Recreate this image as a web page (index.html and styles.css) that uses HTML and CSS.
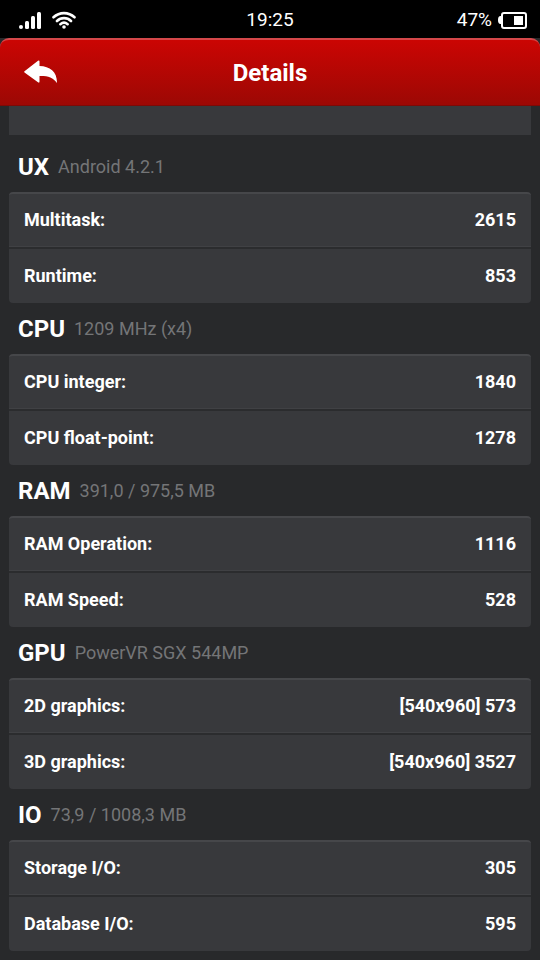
FILE: index.html
```
<!DOCTYPE html>
<html lang="en">
<head>
  <meta charset="UTF-8" />
  <meta name="viewport" content="width=device-width, initial-scale=1.0" />
  <title>Details</title>
  <link rel="stylesheet" href="styles.css">
</head>
<body>
  <!-- STATUS BAR -->
  <div class="status">
    <div class="status-left">
      <svg class="signal" width="22" height="18" viewBox="0 0 22 18" aria-hidden="true">
        <rect x="0" y="14" width="4" height="4" rx="2" />
        <rect x="6" y="10" width="4" height="8" rx="1.5" />
        <rect x="12" y="5" width="4" height="13" rx="1.5" />
        <rect x="18" y="1" width="4" height="17" rx="1.5" />
      </svg>
      <svg class="wifi" width="24" height="18" viewBox="0 0 24 18" aria-hidden="true">
        <path d="M1.5 6.3C7.5 .7 16.5 .7 22.5 6.3M5 10C9 6.2 15 6.2 19 10M8.4 13.2Q12 10.2 15.6 13.2" />
        <circle cx="12" cy="16" r="1.8" />
      </svg>
    </div>
    <time class="clock">19:25</time>
    <div class="status-right">
      <span>47%</span>
      <svg class="battery" width="29" height="18" viewBox="0 0 29 18" aria-hidden="true">
        <path d="M4 5H2.5Q0 5 0 9t2.5 4H4z" />
        <rect class="shell" x="4" y="2" width="24" height="15" rx="2" />
        <rect x="16" y="5" width="9" height="9" />
      </svg>
    </div>
  </div>

  <!-- TITLE BAR -->
  <header class="topbar">
    <button class="back" type="button" aria-label="Back">
      <svg width="34" height="26" viewBox="0 0 34 26" aria-hidden="true">
        <path d="M.5 11.2 14 .8Q15.5 -.2 15.5 1.6V6C26 6.3 33.2 11.5 33 23 29 17.5 24 15.8 15.5 16V21.6Q15.5 23.4 14 22.2L.5 12.4Q-.2 11.8 .5 11.2Z" />
      </svg>
    </button>
    <h1>Details</h1>
  </header>

  <main class="scores">
    <div class="card-tail"></div>

    <section>
      <h2 id="ux">UX <small>Android 4.2.1</small></h2>
      <table class="card" aria-labelledby="ux">
        <tr><th scope="row">Multitask:</th><td>2615</td></tr>
        <tr><th scope="row">Runtime:</th><td>853</td></tr>
      </table>
    </section>

    <section>
      <h2 id="cpu">CPU <small>1209 MHz (x4)</small></h2>
      <table class="card" aria-labelledby="cpu">
        <tr><th scope="row">CPU integer:</th><td>1840</td></tr>
        <tr><th scope="row">CPU float-point:</th><td>1278</td></tr>
      </table>
    </section>

    <section>
      <h2 id="ram">RAM <small>391,0 / 975,5 MB</small></h2>
      <table class="card" aria-labelledby="ram">
        <tr><th scope="row">RAM Operation:</th><td>1116</td></tr>
        <tr><th scope="row">RAM Speed:</th><td>528</td></tr>
      </table>
    </section>

    <section>
      <h2 id="gpu">GPU <small>PowerVR SGX 544MP</small></h2>
      <table class="card" aria-labelledby="gpu">
        <tr><th scope="row">2D graphics:</th><td>[540x960] 573</td></tr>
        <tr><th scope="row">3D graphics:</th><td>[540x960] 3527</td></tr>
      </table>
    </section>

    <section>
      <h2 id="io">IO <small>73,9 / 1008,3 MB</small></h2>
      <table class="card" aria-labelledby="io">
        <tr><th scope="row">Storage I/O:</th><td>305</td></tr>
        <tr><th scope="row">Database I/O:</th><td>595</td></tr>
      </table>
    </section>
  </main>
</body>
</html>
```
FILE: styles.css
```
:root {
  --bg: #28292b;
  --card: #38393c;
  --card-edge: #46474a;
  --muted: #747577;
}
* { margin:0; padding:0; box-sizing:border-box; }
body {
  background:var(--bg); color:#fff;
  font-family:Roboto, "Liberation Sans", sans-serif;
}

/* STATUS BAR */
.status {
  display:grid; grid-template-columns:1fr auto 1fr; align-items:center;
  height:38px; padding:2px 13px 0;
  background:#000; font-size:19px; line-height:24px;
}
.status svg { display:block; fill:#fff; }
.status-left, .status-right { display:flex; align-items:center; }
.status-left { gap:11px; padding-left:6px; }
.status-right { gap:6px; justify-content:flex-end; }
.wifi path { fill:none; stroke:#fff; stroke-width:2.6; stroke-linecap:round; }
.battery .shell { fill:none; stroke:#fff; stroke-width:2; }

/* TITLE BAR */
.topbar {
  display:grid; grid-template-columns:1fr auto 1fr; align-items:center;
  height:68px; padding:0 24px;
  background:linear-gradient(#cb0503, #9c0804);
  border-top:2px solid #d5474a; border-bottom:1px solid #7d0a06;
  border-radius:9px 9px 0 0;
}
.topbar h1 { font-size:24px; line-height:32px; }
.back { justify-self:start; background:none; border:0; cursor:pointer; }
.back svg { display:block; fill:#fff; }

/* SCORES */
.scores { padding:0 9px 9px; }
.card-tail { height:29px; margin-bottom:6px; background:var(--card); }
h2 {
  display:flex; align-items:center; gap:9px;
  padding:10px 9px 9px; font-size:24px; line-height:32px;
}
h2 small { font-size:18px; font-weight:400; color:var(--muted); }

.card {
  width:100%; border-collapse:separate; border-spacing:0;
  background:var(--card); border-top:2px solid var(--card-edge);
  border-radius:4px; font-size:18px; line-height:22px;
}
.card th, .card td { padding:15px; font-weight:700; border-bottom:1px solid #404144; }
.card th { text-align:left; }
.card td { text-align:right; }
.card tr + tr > * { padding:16px 15px; border-top:2px solid #2b2c2e; border-bottom:0; }
```
